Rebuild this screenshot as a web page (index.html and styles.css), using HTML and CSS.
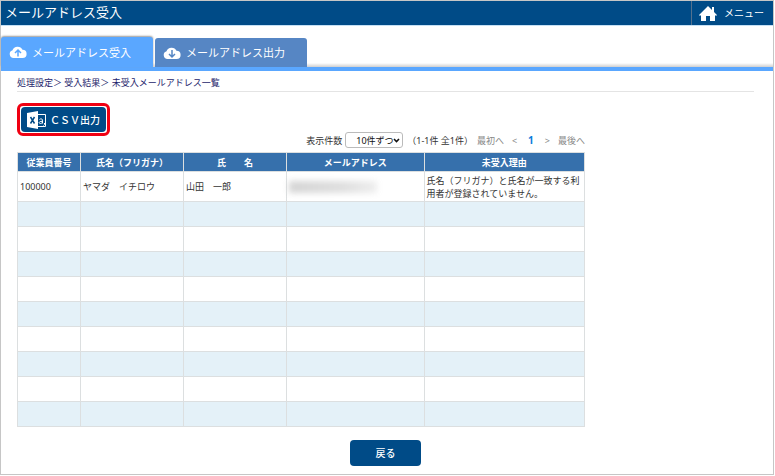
FILE: index.html
```html
<!DOCTYPE html>
<html lang="ja">
<head>
<meta charset="utf-8">
<meta name="viewport" content="width=device-width, initial-scale=1">
<title>メールアドレス受入</title>
<link rel="stylesheet" href="styles.css">
</head>
<body>
<div class="frame">
  <header class="topbar">
    <h1 class="title">メールアドレス受入</h1>
    <a class="menu" href="#">
      <svg class="home" viewBox="0 0 18 15" aria-hidden="true"><path fill="#fff" d="M9 0 13 4V1h2v5l3 3-1 1-1-1v6h-5v-5H7v5H2V9l-1 1-1-1z"/></svg>
      <span>メニュー</span>
    </a>
  </header>
  <nav class="tabs">
    <a class="tab active" href="#">
      <svg class="cloud" viewBox="0 0 17 12" aria-hidden="true"><path fill="#fff" d="M4 12a4 4 0 0 1-1-7.8A5.4 5.4 0 0 1 13 3.800A4.100 4.100 0 0 1 13 12z"/><path fill="none" stroke="#5aa7ff" stroke-width="1.500" d="M8.500 10.500V4M5.500 7l3-3 3 3"/></svg>
      <span>メールアドレス受入</span>
    </a>
    <a class="tab" href="#">
      <svg class="cloud" viewBox="0 0 17 12" aria-hidden="true"><path fill="#fff" d="M4 12a4 4 0 0 1-1-7.8A5.400 5.400 0 0 1 13 3.800A4.100 4.100 0 0 1 13 12z"/><path fill="none" stroke="#5686c4" stroke-width="1.500" d="M8.500 3V10M5.500 7l3 3 3-3"/></svg>
      <span>メールアドレス出力</span>
    </a>
  </nav>
  <main class="content">
    <p class="crumbs">処理設定＞ 受入結果＞ 未受入メールアドレス一覧</p>
    <div class="highlight">
      <button class="btn csv" type="button">
        <svg class="excel" viewBox="0 0 20 18" aria-hidden="true"><path fill="none" stroke="#fff" d="M10 3.500h8.500v12H10"/><path fill="#fff" d="M0 2 11 0v18L0 16z"/><path fill="none" stroke="#004b87" stroke-width="1.500" d="m3.500 6 4 6.500M7.500 6l-4 6.500"/><path fill="none" stroke="#fff" d="M12.500 8.500c1-1 3-.8 3 .7V12.500M15.500 10.300c-4-.3-4 2.400-2 2.200q1.500-.2 2-1.200M17.500 12v1.500l-1 1"/></svg>
        <span>ＣＳＶ出力</span>
      </button>
    </div>
    <div class="results">
      <div class="pager">
        <label for="size">表示件数</label>
        <span class="picker">
          <select id="size"><option>10件ずつ</option></select>
          <svg class="chevron" viewBox="0 0 7 5" aria-hidden="true"><path fill="none" stroke="#111" stroke-width="1.600" d="m1 1 2.500 2.500L6 1"/></svg>
        </span>
        <span class="count">（1-1件 全1件）</span>
        <a href="#">最初へ</a><a href="#">&lt;</a><a class="current" href="#">1</a><a href="#">&gt;</a><a href="#">最後へ</a>
      </div>
      <table>
        <colgroup><col class="c-id"><col class="c-name"><col class="c-name"><col class="c-mail"><col class="c-why"></colgroup>
        <thead><tr><th>従業員番号</th><th>氏名（フリガナ）</th><th>氏　　名</th><th>メールアドレス</th><th>未受入理由</th></tr></thead>
        <tbody>
          <tr class="filled"><td>100000</td><td>ヤマダ　イチロウ</td><td>山田　一郎</td><td><span class="masked"></span></td><td>氏名（フリガナ）と氏名が一致する利用者が登録されていません。</td></tr>
          <tr><td></td><td></td><td></td><td></td><td></td></tr>
          <tr><td></td><td></td><td></td><td></td><td></td></tr>
          <tr><td></td><td></td><td></td><td></td><td></td></tr>
          <tr><td></td><td></td><td></td><td></td><td></td></tr>
          <tr><td></td><td></td><td></td><td></td><td></td></tr>
          <tr><td></td><td></td><td></td><td></td><td></td></tr>
          <tr><td></td><td></td><td></td><td></td><td></td></tr>
          <tr><td></td><td></td><td></td><td></td><td></td></tr>
          <tr><td></td><td></td><td></td><td></td><td></td></tr>
        </tbody>
      </table>
    </div>
    <div class="actions"><button class="btn back" type="button">戻る</button></div>
  </main>
</div>
</body>
</html>
```
FILE: styles.css
```css
* { box-sizing: border-box; }
body {
  margin: 0;
  background: #fff;
  color: #333;
  font: 9px/13px "Noto Sans", "Noto Sans CJK JP", sans-serif;
}
a { color: inherit; text-decoration: none; }
.frame {
  min-height: calc(100vh - 1px);
  margin-right: 1px;
  border: 1px solid #c6c6c6;
}
.topbar {
  display: flex;
  justify-content: space-between;
  height: 24px;
  background: #004b87;
  color: #fff;
  box-shadow: 0 1px 0 #c5e0f5;
}
.title {
  margin: 0;
  padding-left: 4px;
  font-size: 13px;
  font-weight: 400;
  line-height: 23px;
}
.menu {
  display: flex;
  align-items: center;
  gap: 7px;
  padding: 0 9px 0 7px;
  border-left: 1px solid #54718f;
  font-size: 10px;
}
.home { width: 18px; height: 15px; }
.tabs {
  display: flex;
  align-items: flex-end;
  gap: 2px;
  padding-top: 12px;
  border-bottom: 4px solid #5aa7ff;
  background: linear-gradient(transparent 38px, #cfcfcf);
}
.tab {
  display: flex;
  align-items: center;
  gap: 5px;
  width: 152px;
  height: 29px;
  padding-left: 8px;
  border-radius: 3px 3px 0 0;
  background: #5686c4;
  color: #fff;
  font-size: 11px;
}
.tab.active {
  height: 30px;
  background: #5aa7ff;
  box-shadow: 0 -1px 2px #999;
}
.cloud { width: 18px; height: 12px; }
.content { padding: 5px 19px 6px 16px; }
.crumbs {
  margin: 0;
  padding-bottom: 2px;
  border-bottom: 1px solid #e4e4e4;
  color: #1d1d6b;
}
.highlight {
  width: max-content;
  margin-top: 11px;
  padding: 1px;
  border: 3px solid #f00012;
  border-radius: 6px;
}
.btn {
  border: 0;
  border-radius: 4px;
  background: #004b87;
  color: #fff;
  font: 10px/14px "Noto Sans", "Noto Sans CJK JP", sans-serif;
}
.csv {
  display: flex;
  align-items: center;
  gap: 3px;
  width: 85px;
  height: 25px;
  padding: 0 6px;
  font-weight: 500;
  white-space: nowrap;
}
.excel { width: 20px; height: 18px; flex: none; }
.results { width: 75%; min-width: 568px; }
.pager {
  display: flex;
  align-items: center;
  justify-content: flex-end;
  gap: 8px;
  height: 16px;
  margin: -4px 0 4px;
  color: #888;
}
.pager label { margin-right: -5px; color: #333; }
.picker { position: relative; display: flex; }
.picker select {
  width: 58px;
  height: 16px;
  padding: 0 0 0 10px;
  border: 1px solid #bbb;
  border-radius: 3px;
  background: #fff;
  color: #111;
  font: inherit;
  appearance: none;
}
.chevron {
  position: absolute;
  top: 6px;
  right: 3px;
  width: 7px;
  height: 5px;
  pointer-events: none;
}
.count { margin: 0 -4px; color: #333; }
.current { margin: 0 3px; color: #0a7cdc; font-size: 10px; font-weight: 700; }
table {
  width: 100%;
  border-collapse: collapse;
  table-layout: fixed;
}
.c-id { width: 11%; }
.c-name { width: 18%; }
.c-mail { width: 24%; }
.c-why { width: 28%; }
th, td { border: 1px solid #dcdfe0; }
th {
  height: 19px;
  padding: 0;
  background: #3670ac;
  color: #fff;
  font-weight: 700;
}
td { height: 25px; padding: 0 2px; }
.filled td { height: 30px; }
tbody tr:nth-child(even) { background: #e4f1f8; }
.masked {
  display: block;
  width: 88px;
  height: 12px;
  background: linear-gradient(90deg, #d4d4d4, #dedede 60%, #eee);
  filter: blur(3px);
}
.actions {
  display: flex;
  justify-content: center;
  margin-top: 13px;
}
.back { width: 71px; height: 26px; font-weight: 500; }
```
